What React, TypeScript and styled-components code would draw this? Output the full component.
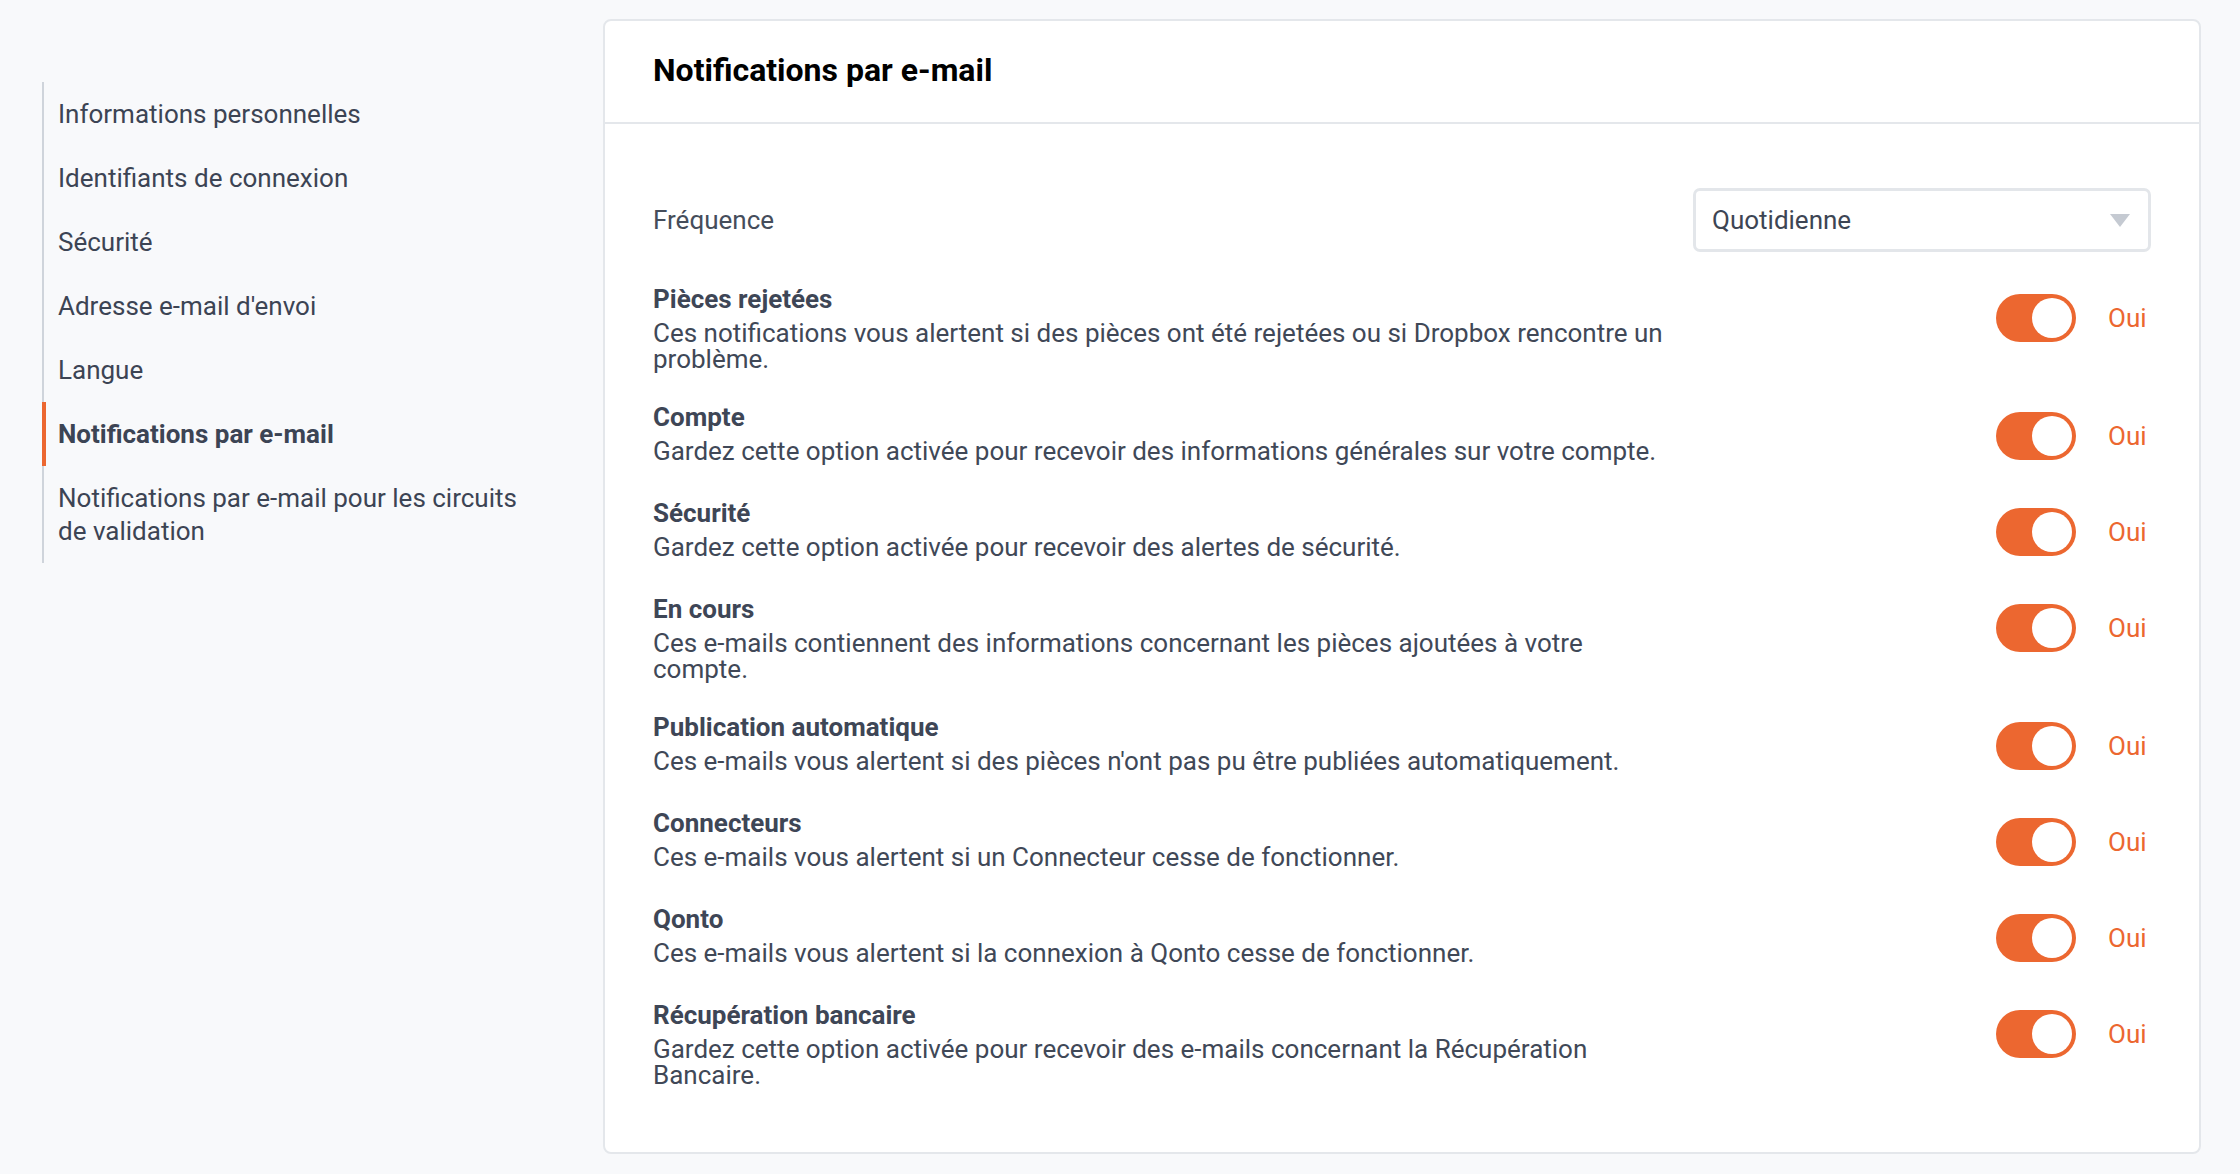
import React, { useState } from 'react';
import styled, { createGlobalStyle } from 'styled-components';

const GlobalStyle = createGlobalStyle`
  html, body {
    margin: 0;
    padding: 0;
    background: #f8f9fb;
  }
  body {
    font-family: Roboto, "Liberation Sans", Arial, sans-serif;
    color: #404857;
  }
  * {
    box-sizing: border-box;
  }
`;

const Page = styled.div`
  display: grid;
  grid-template-columns: 490px 1fr;
  column-gap: 71px;
  align-items: start;
  padding: 19px 39px 21px 42px;
  min-height: 1174px;
`;

const SideNav = styled.ul`
  list-style: none;
  margin: 63px 0 0;
  padding: 0;
  border-left: 2px solid #cfd4db;
`;

const SideItem = styled.li<{ $active?: boolean }>`
  font-size: 26px;
  line-height: 33px;
  padding: 15.5px 0 15.5px ${p => (p.$active ? '12px' : '14px')};
  margin-left: ${p => (p.$active ? '-2px' : '0')};
  border-left: ${p => (p.$active ? '4px solid #ec6730' : 'none')};
  font-weight: ${p => (p.$active ? 700 : 400)};
  color: #3c4454;
  cursor: pointer;
`;

const Card = styled.section`
  background: #ffffff;
  border: 2px solid #e4e7eb;
  border-radius: 8px;
`;

const CardHeader = styled.header`
  padding: 31px 48px 32.5px;
  border-bottom: 2px solid #e4e7eb;
`;

const CardTitle = styled.h1`
  margin: 0;
  font-size: 32px;
  line-height: 37.5px;
  font-weight: 700;
  color: #000000;
`;

const CardBody = styled.div`
  display: flex;
  flex-direction: column;
  gap: 32px;
  padding: 64px 48px 64px;
`;

const FieldRow = styled.div`
  display: flex;
  align-items: center;
  justify-content: space-between;
  height: 64px;
  margin-bottom: 1.5px;
`;

const FieldLabel = styled.span`
  font-size: 26px;
  color: #454d5b;
`;

const SelectBox = styled.div`
  width: 458px;
  height: 64px;
  display: flex;
  align-items: center;
  justify-content: space-between;
  padding: 0 18px 0 16px;
  border: 3px solid #e3e6ea;
  border-radius: 7px;
  font-size: 26px;
  color: #3d4554;
  background: #ffffff;
  cursor: pointer;
`;

const SettingRow = styled.div`
  display: flex;
  align-items: flex-start;
  justify-content: space-between;
  min-height: 64px;
`;

const SettingText = styled.div`
  max-width: 1020px;
`;

const SettingTitle = styled.div`
  font-size: 26px;
  line-height: 26px;
  font-weight: 700;
  color: #3e4656;
  margin-bottom: 8px;
`;

const SettingDesc = styled.div`
  font-size: 26px;
  line-height: 26px;
  color: #404857;
`;

const ToggleGroup = styled.div`
  display: flex;
  align-items: center;
  gap: 32px;
  padding-top: 8px;
  flex-shrink: 0;
`;

const Track = styled.button<{ $on: boolean }>`
  width: 80px;
  height: 48px;
  border: none;
  border-radius: 24px;
  padding: 4px;
  display: flex;
  justify-content: ${p => (p.$on ? 'flex-end' : 'flex-start')};
  align-items: center;
  background: ${p => (p.$on ? '#ec6730' : '#cfd4db')};
  cursor: pointer;
`;

const Knob = styled.span`
  width: 40px;
  height: 40px;
  border-radius: 50%;
  background: #ffffff;
`;

const ToggleLabel = styled.span<{ $on: boolean }>`
  width: 43px;
  font-size: 26px;
  color: ${p => (p.$on ? '#ec6730' : '#8a919c')};
`;

const navItems = [
  'Informations personnelles',
  'Identifiants de connexion',
  'Sécurité',
  "Adresse e-mail d'envoi",
  'Langue',
  'Notifications par e-mail',
  'Notifications par e-mail pour les circuits de validation',
];

const settings = [
  {
    title: 'Pièces rejetées',
    desc: 'Ces notifications vous alertent si des pièces ont été rejetées ou si Dropbox rencontre un problème.',
  },
  {
    title: 'Compte',
    desc: 'Gardez cette option activée pour recevoir des informations générales sur votre compte.',
  },
  {
    title: 'Sécurité',
    desc: 'Gardez cette option activée pour recevoir des alertes de sécurité.',
  },
  {
    title: 'En cours',
    desc: 'Ces e-mails contiennent des informations concernant les pièces ajoutées à votre compte.',
  },
  {
    title: 'Publication automatique',
    desc: "Ces e-mails vous alertent si des pièces n'ont pas pu être publiées automatiquement.",
  },
  {
    title: 'Connecteurs',
    desc: 'Ces e-mails vous alertent si un Connecteur cesse de fonctionner.',
  },
  {
    title: 'Qonto',
    desc: 'Ces e-mails vous alertent si la connexion à Qonto cesse de fonctionner.',
  },
  {
    title: 'Récupération bancaire',
    desc: 'Gardez cette option activée pour recevoir des e-mails concernant la Récupération Bancaire.',
  },
];

const App: React.FC = () => {
  const [enabled, setEnabled] = useState<boolean[]>(settings.map(() => true));

  const toggle = (index: number) => {
    setEnabled(prev => prev.map((v, i) => (i === index ? !v : v)));
  };

  return (
    <>
      <GlobalStyle />
      <Page>
        <SideNav>
          {navItems.map(label => (
            <SideItem key={label} $active={label === 'Notifications par e-mail'}>
              {label}
            </SideItem>
          ))}
        </SideNav>

        <Card>
          <CardHeader>
            <CardTitle>Notifications par e-mail</CardTitle>
          </CardHeader>
          <CardBody>
            <FieldRow>
              <FieldLabel>Fréquence</FieldLabel>
              <SelectBox>
                <span>Quotidienne</span>
                <svg width="20" height="13" viewBox="0 0 20 13">
                  <path d="M0 0 H20 L10 13 Z" fill="#c5cad2" />
                </svg>
              </SelectBox>
            </FieldRow>

            {settings.map((s, i) => (
              <SettingRow key={s.title}>
                <SettingText>
                  <SettingTitle>{s.title}</SettingTitle>
                  <SettingDesc>{s.desc}</SettingDesc>
                </SettingText>
                <ToggleGroup>
                  <Track $on={enabled[i]} onClick={() => toggle(i)} aria-label={s.title}>
                    <Knob />
                  </Track>
                  <ToggleLabel $on={enabled[i]}>{enabled[i] ? 'Oui' : 'Non'}</ToggleLabel>
                </ToggleGroup>
              </SettingRow>
            ))}
          </CardBody>
        </Card>
      </Page>
    </>
  );
};

export default App;
